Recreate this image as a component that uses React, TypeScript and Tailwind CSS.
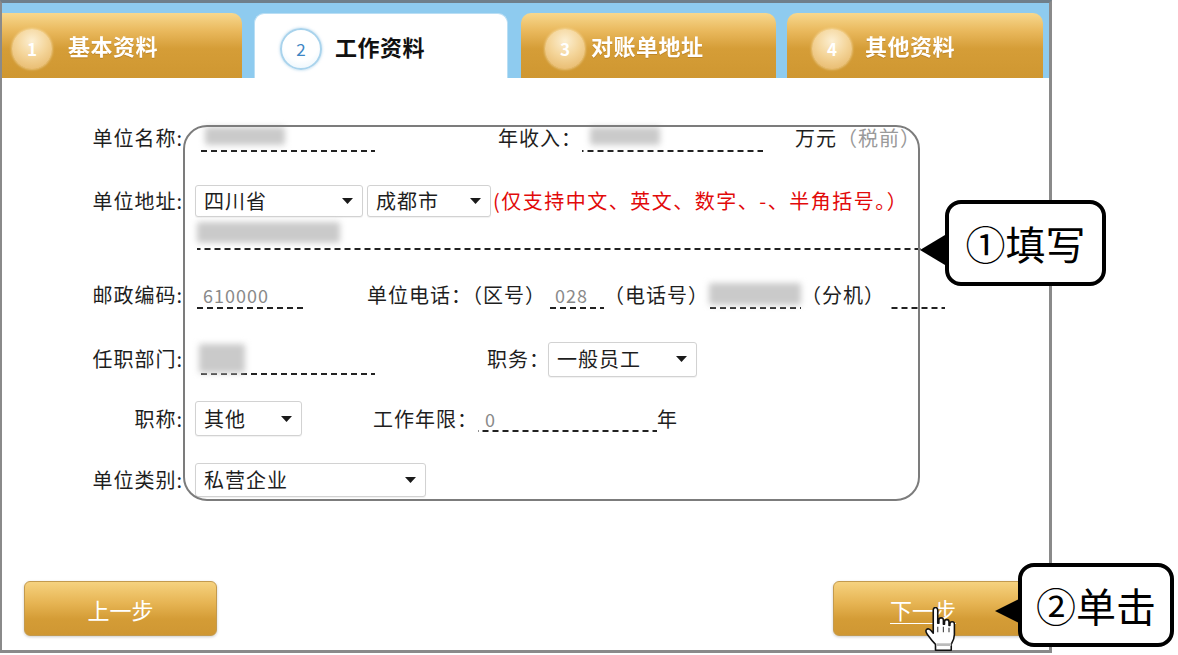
import React from "react";

const dash =
  "bg-[linear-gradient(to_right,#222_62%,transparent_62%)] bg-[length:10px_2px] bg-repeat-x bg-bottom";

function Label({ children }: { children: React.ReactNode }) {
  return <div className="w-[181px] shrink-0 text-right">{children}</div>;
}

function Sel({ cls, text }: { cls: string; text: string }) {
  return (
    <div
      className={`${cls} flex items-center justify-between pl-[8px] pr-[9px] border border-[#d2d2d2] rounded-[3px] bg-white shadow-[0_1px_1px_rgba(0,0,0,0.06)]`}
    >
      <span>{text}</span>
      <svg width="11" height="6" viewBox="0 0 11 6">
        <path d="M0 0h11L5.5 6z" fill="#1a1a1a" />
      </svg>
    </div>
  );
}

function Blur({ cls }: { cls: string }) {
  return <div className={`${cls} bg-[#cacaca] blur-[3px] rounded-[2px]`} />;
}

function GoldCircle({ n, cls }: { n: string; cls: string }) {
  return (
    <div
      className={`${cls} w-[40px] h-[40px] shrink-0 rounded-full flex items-center justify-center bg-[radial-gradient(circle_at_50%_30%,#fcefd2_0%,#f4d59a_45%,#e4b260_100%)] shadow-[0_0_3px_rgba(255,240,200,0.9)] text-white text-[17px] font-bold`}
    >
      {n}
    </div>
  );
}

function GoldTab({ cls, n, label, circleCls }: { cls: string; n: string; label: string; circleCls: string }) {
  return (
    <div
      className={`${cls} h-[65px] shrink-0 flex items-center bg-[linear-gradient(to_bottom,#f7d88e_0%,#e9b85c_28%,#d59d37_55%,#cf9731_100%)]`}
    >
      <GoldCircle n={n} cls={circleCls} />
      <span className="text-white font-bold text-[22px] tracking-[0.5px] drop-shadow-[0_1px_0_rgba(150,90,10,0.35)]">
        {label}
      </span>
    </div>
  );
}

function HandCursor() {
  return (
    <svg
      className="absolute left-[922px] top-[607px]"
      width="36"
      height="46"
      viewBox="0 0 16 20"
    >
      <path
        d="M5 1.2C5 .5 5.4 0 6 0s1 .5 1 1.2V7h.5V5.6c0-.6.4-1 1-1s1 .4 1 1V7.4H10V6.4c0-.6.4-1 1-1s1 .4 1 1V8h.4V7.3c0-.6.4-1 1-1s1 .4 1 1V12c0 2-.9 3.4-1.4 4.3V19H6v-2.6C4.9 15.3 3.4 13.4 2.4 12 1.7 11 1.5 10.3 2 9.8c.6-.6 1.5-.2 2 .4L5 11.4Z"
        fill="#ffffff"
        stroke="#111"
        strokeWidth="0.7"
        strokeLinejoin="round"
      />
      <path d="M7 8.5V11M9.5 8.5V11M12 9V11" stroke="#444" strokeWidth="0.5" />
      <path d="M6.5 16.5h6.5" stroke="#bbb" strokeWidth="1.2" />
    </svg>
  );
}

export default function App() {
  return (
    <div className="relative w-[1178px] h-[655px] bg-white overflow-hidden font-['Noto_Sans_CJK_SC','Noto_Sans',sans-serif] text-[#1e1e1e]">
      {/* panel */}
      <div className="w-[1052px] h-[653px] border-l-2 border-r-[3px] border-b-[3px] border-t-[3px] border-l-[#8a8a8a] border-r-[#8a8a8a] border-b-[#8a8a8a] border-t-[#6f7f8a] flex flex-col">
        {/* tab bar */}
        <div className="h-[75px] shrink-0 bg-[#8ecbef] flex items-end">
          <GoldTab cls="w-[240px] rounded-tr-[10px]" n="1" label="基本资料" circleCls="ml-[10px] mr-[16px] mt-[6px]" />
          <div className="ml-[12px] w-[254px] h-[65px] shrink-0 flex items-center bg-white rounded-t-[10px] border-l border-t border-r border-[#b9def4]">
            <div className="ml-[25px] mr-[13px] mt-[6px] w-[42px] h-[42px] rounded-full flex items-center justify-center bg-[radial-gradient(circle_at_50%_35%,#ffffff_55%,#e3f2fb_100%)] border-2 border-[#a9d3ec] shadow-[0_0_3px_rgba(120,180,220,0.6)] text-[#3d86c4] text-[17px]">
              2
            </div>
            <span className="text-[#111] font-bold text-[22px] tracking-[0.5px]">工作资料</span>
          </div>
          <GoldTab cls="ml-[13px] w-[255px] rounded-t-[10px]" n="3" label="对账单地址" circleCls="ml-[24px] mr-[6px] mt-[6px]" />
          <GoldTab cls="ml-[11px] w-[256px] rounded-t-[10px]" n="4" label="其他资料" circleCls="ml-[25px] mr-[13px] mt-[6px]" />
        </div>

        {/* body */}
        <div className="flex-1 flex flex-col text-[20px] tracking-[1px] leading-none">
          {/* row 1 */}
          <div className="flex items-center h-[36px] mt-[42px]">
            <Label>单位名称:</Label>
            <div className={`ml-[14px] w-[178px] h-[28px] shrink-0 flex items-start pt-[3px] pl-[8px] ${dash}`}>
              <Blur cls="w-[80px] h-[18px]" />
            </div>
            <span className="ml-[123px]">年收入：</span>
            <div className={`w-[181px] h-[28px] shrink-0 flex items-start pt-[3px] pl-[8px] ${dash}`}>
              <Blur cls="w-[70px] h-[18px]" />
            </div>
            <span className="ml-[32px]">万元</span>
            <span className="text-[#9a9a9a]">（税前）</span>
          </div>

          {/* row 2 */}
          <div className="flex items-center h-[32px] mt-[29px]">
            <Label>单位地址:</Label>
            <Sel cls="ml-[12px] w-[168px] h-[32px] shrink-0" text="四川省" />
            <Sel cls="ml-[4px] w-[124px] h-[32px] shrink-0" text="成都市" />
            <span className="ml-[2px] text-[#e20a0a] tracking-[1.5px]">(仅支持中文、英文、数字、-、半角括号。）</span>
          </div>

          {/* row 2b */}
          <div className="flex items-center h-[31px] mt-[2px]">
            <div className="w-[181px] shrink-0" />
            <div className={`ml-[14px] w-[725px] h-[31px] shrink-0 flex items-start pt-[3px] ${dash}`}>
              <Blur cls="w-[143px] h-[21px]" />
            </div>
          </div>

          {/* row 3 */}
          <div className="flex items-center h-[34px] mt-[28px]">
            <Label>邮政编码:</Label>
            <div className={`ml-[14px] w-[110px] h-[28px] shrink-0 flex items-center pl-[6px] text-[#8a8a8a] text-[18px] ${dash}`}>
              610000
            </div>
            <span className="ml-[60px]">单位电话：（区号）</span>
            <div className={`w-[58px] h-[28px] shrink-0 flex items-center pl-[9px] text-[#8a8a8a] text-[18px] ${dash}`}>
              028
            </div>
            <span>（电话号）</span>
            <div className={`w-[92px] h-[28px] shrink-0 flex items-start pt-[2px] ${dash}`}>
              <Blur cls="w-[92px] h-[22px]" />
            </div>
            <span>（分机）</span>
            <div className={`ml-[3px] w-[57px] h-[28px] shrink-0 ${dash}`} />
          </div>

          {/* row 4 */}
          <div className="flex items-center h-[34px] mt-[30px]">
            <Label>任职部门:</Label>
            <div className={`ml-[14px] w-[178px] h-[31px] shrink-0 flex items-start pl-[2px] ${dash}`}>
              <Blur cls="w-[46px] h-[29px]" />
            </div>
            <span className="ml-[112px]">职务：</span>
            <Sel cls="ml-[-2px] w-[149px] h-[35px] shrink-0" text="一般员工" />
          </div>

          {/* row 5 */}
          <div className="flex items-center h-[35px] mt-[25px]">
            <Label>职称:</Label>
            <Sel cls="ml-[12px] w-[107px] h-[35px] shrink-0" text="其他" />
            <span className="ml-[71px]">工作年限：</span>
            <div className={`w-[179px] h-[26px] shrink-0 flex items-center pl-[7px] text-[#8a8a8a] text-[18px] ${dash}`}>
              0
            </div>
            <span>年</span>
          </div>

          {/* row 6 */}
          <div className="flex items-center h-[34px] mt-[27px]">
            <Label>单位类别:</Label>
            <Sel cls="ml-[12px] w-[231px] h-[34px] shrink-0" text="私营企业" />
          </div>

          {/* buttons */}
          <div className="flex justify-between mt-[84px] px-[22px] tracking-normal">
            <div className="w-[193px] h-[55px] rounded-[6px] border border-[#c39a4e] bg-[linear-gradient(to_bottom,#f6d27f_0%,#e6b453_40%,#d49c36_70%,#cf9733_100%)] shadow-[0_1px_3px_rgba(0,0,0,0.2)] flex items-center justify-center text-white text-[22px]">
              上一步
            </div>
            <div className="mr-[1px] w-[193px] h-[55px] rounded-[6px] border border-[#c39a4e] bg-[linear-gradient(to_bottom,#f6d27f_0%,#e6b453_40%,#d49c36_70%,#cf9733_100%)] shadow-[0_1px_3px_rgba(0,0,0,0.2)] flex items-center justify-start pl-[56px] text-white text-[22px]">
              <span className="underline underline-offset-[4px] decoration-1">下一步</span>
            </div>
          </div>
        </div>
      </div>

      {/* annotation frame */}
      <div className="absolute left-[183px] top-[125px] w-[737px] h-[376px] border-2 border-[#7c7c7c] rounded-[24px] pointer-events-none" />

      {/* callout 1 */}
      <svg className="absolute left-[920px] top-[232px]" width="30" height="36" viewBox="0 0 30 36">
        <polygon points="0,18 30,0 30,36" fill="#000" />
      </svg>
      <div className="absolute left-[945px] top-[200px] w-[161px] h-[86px] border-[4px] border-black rounded-[16px] bg-white flex items-center justify-center text-[40px] text-black leading-none">
        ①填写
      </div>

      <HandCursor />

      {/* callout 2 */}
      <svg className="absolute left-[995px] top-[597px]" width="28" height="28" viewBox="0 0 28 28">
        <polygon points="0,14 28,0 28,28" fill="#000" />
      </svg>
      <div className="absolute left-[1018px] top-[563px] w-[156px] h-[84px] border-[4px] border-black rounded-[16px] bg-white flex items-center justify-center text-[40px] text-black leading-none">
        ②单击
      </div>
    </div>
  );
}
